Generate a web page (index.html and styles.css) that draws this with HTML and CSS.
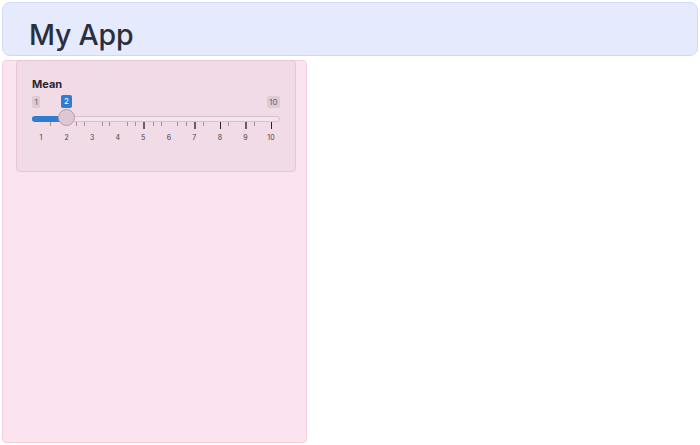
FILE: index.html
```html
<!DOCTYPE html>
<html>
<head>
<meta charset="utf-8">
<link rel="stylesheet" href="styles.css">
</head>
<body>
<header class="title-panel"><h1 class="title">My App</h1></header>
<div class="layout">
  <aside class="sidebar">
    <div class="well">
      <label class="input-label">Mean</label>
      <div class="slider">
        <span class="lbl lbl-min">1</span>
        <span class="lbl lbl-from">2</span>
        <span class="lbl lbl-max">10</span>
        <div class="track"></div>
        <div class="bar"></div>
        <span class="tick minor" style="left:18px"></span>
        <span class="tick minor" style="left:44px"></span>
        <span class="tick minor" style="left:52px"></span>
        <span class="tick minor" style="left:69.7px"></span>
        <span class="tick minor" style="left:77.3px"></span>
        <span class="tick minor" style="left:94.7px"></span>
        <span class="tick minor" style="left:103px"></span>
        <span class="tick major thick" style="left:111.5px"></span>
        <span class="tick minor" style="left:120.7px"></span>
        <span class="tick minor" style="left:128.7px"></span>
        <span class="tick minor" style="left:145.3px"></span>
        <span class="tick minor" style="left:153.7px"></span>
        <span class="tick major thick" style="left:162.5px"></span>
        <span class="tick minor" style="left:171.3px"></span>
        <span class="tick major" style="left:188px"></span>
        <span class="tick minor" style="left:196.3px"></span>
        <span class="tick major thick" style="left:213px"></span>
        <span class="tick minor" style="left:222px"></span>
        <span class="tick major" style="left:239px"></span>
        <div class="handle"></div>
        <span class="grid-text" style="left:9px">1</span>
        <span class="grid-text" style="left:34.6px">2</span>
        <span class="grid-text" style="left:60.1px">3</span>
        <span class="grid-text" style="left:85.7px">4</span>
        <span class="grid-text" style="left:111.2px">5</span>
        <span class="grid-text" style="left:136.8px">6</span>
        <span class="grid-text" style="left:162.3px">7</span>
        <span class="grid-text" style="left:187.9px">8</span>
        <span class="grid-text" style="left:213.4px">9</span>
        <span class="grid-text" style="left:239px">10</span>
      </div>
    </div>
  </aside>
</div>
</body>
</html>
```
FILE: styles.css
```css
* { box-sizing: border-box; }
html, body { margin: 0; padding: 0; background: #ffffff; }
body {
  font-family: Inter, "Liberation Sans", sans-serif;
  color: #2b2d3a;
  width: 700px;
  height: 445px;
  overflow: hidden;
}
.title-panel {
  margin: 2px 2px 0 2px;
  height: 54px;
  background: #e5eafd;
  border: 1.5px solid #d0d9f5;
  border-radius: 8px;
  display: flex;
  align-items: center;
  padding-left: 26px;
}
.title {
  margin: 0;
  margin-top: 10px;
  font-size: 28.5px;
  font-weight: 500;
  letter-spacing: -0.2px;
  color: #2a2e3e;
}
.layout {
  display: flex;
  padding: 4px 0 0 2px;
}
.sidebar {
  width: 305px;
  height: 383px;
  background: #fbe4f0;
  border: 1.5px solid #f4cfdf;
  border-radius: 4px;
  padding: 0 0 0 13px;
}
.well {
  width: 280px;
  height: 112px;
  margin-top: -1.5px;
  background: #f1dbe6;
  border: 1px solid #e4c6d5;
  border-radius: 4px;
  padding: 16px 15px 0 15px;
}
.input-label {
  display: block;
  font-size: 11px;
  font-weight: 700;
  line-height: 14px;
  color: #2c2430;
}
.slider {
  position: relative;
  height: 48px;
  margin-top: 4px;
}
.lbl {
  position: absolute;
  font-size: 8px;
  line-height: 12px;
  height: 12px;
  padding: 0 2.5px;
  border-radius: 2px;
  background: #dccad4;
  color: #6e6068;
}
.lbl-min { left: 0; top: 1px; }
.lbl-max { right: 0; top: 1px; }
.lbl-from {
  left: 29px;
  top: 0;
  height: 13px;
  line-height: 13px;
  padding: 0 3px;
  background: #2f7dd0;
  color: #ffffff;
}
.track {
  position: absolute;
  left: 0;
  right: 0;
  top: 21px;
  height: 6px;
  background: #f4e5ed;
  border: 1px solid #d7c0cc;
  border-radius: 3px;
}
.bar {
  position: absolute;
  left: 0;
  top: 21px;
  width: 36px;
  height: 6px;
  background: #2f7dd0;
  border-radius: 3px 0 0 3px;
}
.handle {
  position: absolute;
  left: 26px;
  top: 14px;
  width: 17px;
  height: 17px;
  border-radius: 50%;
  background: #dcc7d2;
  border: 1px solid #b59fab;
}
.tick {
  position: absolute;
  top: 27px;
  width: 1px;
}
.tick.minor { height: 4px; background: #a08c97; }
.tick.major { height: 7px; background: #2a2028; }
.tick.major.thick { width: 2px; background: #6f5b66; margin-left: -0.5px; }
.grid-text {
  position: absolute;
  top: 38px;
  font-size: 7px;
  line-height: 9px;
  color: #4a3e46;
  transform: translateX(-50%);
}
```
